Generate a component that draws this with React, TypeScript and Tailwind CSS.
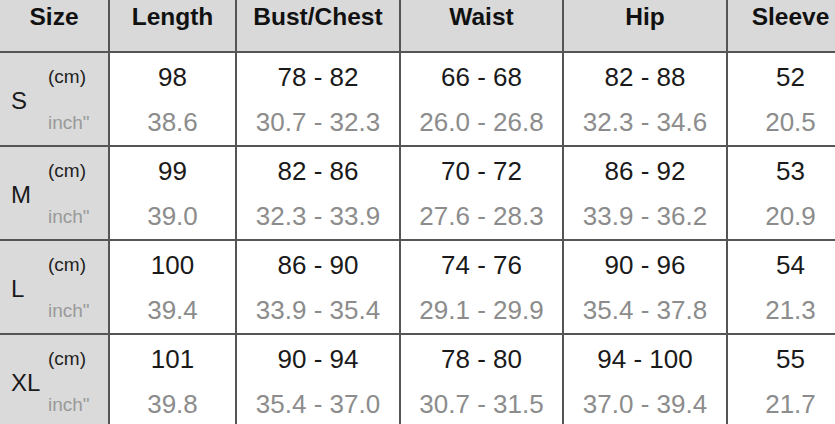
const columns = [
  { label: "Size", width: "w-[110px]" },
  { label: "Length", width: "w-[127px]" },
  { label: "Bust/Chest", width: "w-[164px]" },
  { label: "Waist", width: "w-[163px]" },
  { label: "Hip", width: "w-[164px]" },
  { label: "Sleeve", width: "w-[127px]" },
];

const rows = [
  {
    size: "S",
    cm: ["98", "78 - 82", "66 - 68", "82 - 88", "52"],
    inch: ["38.6", "30.7 - 32.3", "26.0 - 26.8", "32.3 - 34.6", "20.5"],
  },
  {
    size: "M",
    cm: ["99", "82 - 86", "70 - 72", "86 - 92", "53"],
    inch: ["39.0", "32.3 - 33.9", "27.6 - 28.3", "33.9 - 36.2", "20.9"],
  },
  {
    size: "L",
    cm: ["100", "86 - 90", "74 - 76", "90 - 96", "54"],
    inch: ["39.4", "33.9 - 35.4", "29.1 - 29.9", "35.4 - 37.8", "21.3"],
  },
  {
    size: "XL",
    cm: ["101", "90 - 94", "78 - 80", "94 - 100", "55"],
    inch: ["39.8", "35.4 - 37.0", "30.7 - 31.5", "37.0 - 39.4", "21.7"],
  },
];

export default function App() {
  return (
    <div className="h-[424px] w-[835px] overflow-hidden bg-white font-['Liberation_Sans',Arial,sans-serif]">
      <div className="flex w-max flex-col">
        {/* Header */}
        <div className="flex h-[53px] bg-[#d9d9d9]">
          {columns.map((col) => (
            <div
              key={col.label}
              className={`${col.width} shrink-0 border-b-2 border-r-2 border-[#555] pt-[5px] text-center text-[24.5px] font-bold leading-none text-[#111]`}
            >
              {col.label}
            </div>
          ))}
        </div>

        {rows.map((row) => (
          <div key={row.size} className="flex h-[94px]">
            <div className="flex w-[110px] shrink-0 items-center border-b-2 border-r-2 border-[#555] bg-[#dadada]">
              <span className="w-[48px] shrink-0 pl-[11px] pt-[3px] text-[24px] leading-none text-[#1a1a1a]">
                {row.size}
              </span>
              <div className="flex h-full flex-col pt-[1px]">
                <span className="flex flex-1 items-center text-[19px] leading-none text-[#222]">(cm)</span>
                <span className="flex flex-1 items-center text-[19px] leading-none text-[#999]">inch"</span>
              </div>
            </div>
            {row.cm.map((v, i) => (
              <div
                key={i}
                className={`${columns[i + 1].width} flex shrink-0 flex-col border-b-2 border-r-2 border-[#555] pt-[1px] text-center text-[26px] leading-none`}
              >
                <span className="flex flex-1 items-center justify-center text-[#1a1a1a]">{v}</span>
                <span className="flex flex-1 items-center justify-center text-[#8c8c8c]">{row.inch[i]}</span>
              </div>
            ))}
          </div>
        ))}
      </div>
    </div>
  );
}
